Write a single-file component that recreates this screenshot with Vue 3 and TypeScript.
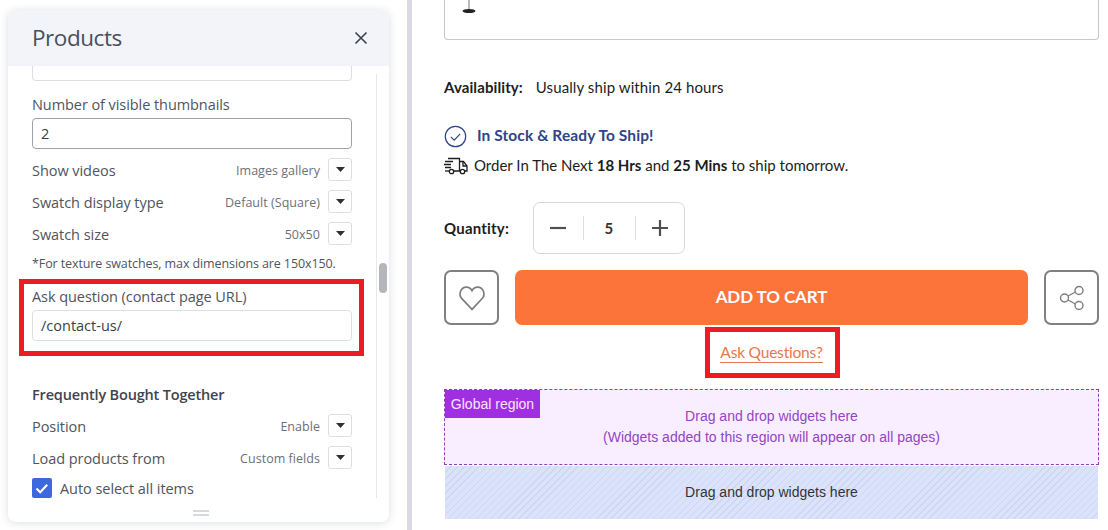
<script setup lang="ts">
interface Row { label: string; value: string }
const rowsA: Row[] = [
  { label: 'Show videos', value: 'Images gallery' },
  { label: 'Swatch display type', value: 'Default (Square)' },
  { label: 'Swatch size', value: '50x50' },
]
const rowsB: Row[] = [
  { label: 'Position', value: 'Enable' },
  { label: 'Load products from', value: 'Custom fields' },
]
</script>

<template>
  <div class="page">
    <aside class="side">
      <section class="panel">
        <header class="head">
          <h1>Products</h1>
          <svg class="close" width="14" height="14" viewBox="0 0 14 14"><path d="M1.500 1.500l11 11M12.500 1.500l-11 11" stroke="#3f4550" stroke-width="1.700" fill="none" /></svg>
        </header>
        <div class="scroll">
          <div class="content">
            <div class="stub"></div>
            <label class="lbl first">Number of visible thumbnails</label>
            <div class="field dark">2</div>
            <div class="rows">
              <div v-for="r in rowsA" :key="r.label" class="row">
                <span class="rl">{{ r.label }}</span>
                <span class="rv">{{ r.value }}</span>
                <span class="sel"><svg width="9" height="5" viewBox="0 0 9 5"><path d="M0 0h9L4.500 5z" fill="#2d323a" /></svg></span>
              </div>
            </div>
            <p class="note">*For texture swatches, max dimensions are 150x150.</p>
            <label class="lbl ask">Ask question (contact page URL)</label>
            <div class="field">/contact-us/</div>
            <h2>Frequently Bought Together</h2>
            <div class="rows second">
              <div v-for="r in rowsB" :key="r.label" class="row">
                <span class="rl">{{ r.label }}</span>
                <span class="rv">{{ r.value }}</span>
                <span class="sel"><svg width="9" height="5" viewBox="0 0 9 5"><path d="M0 0h9L4.500 5z" fill="#2d323a" /></svg></span>
              </div>
            </div>
            <div class="check">
              <span class="box"><svg width="14" height="11" viewBox="0 0 14 11"><path d="M1.500 5.500l3.700 3.700 7-7.500" stroke="#fff" stroke-width="2.200" fill="none" /></svg></span>
              <span class="rl">Auto select all items</span>
            </div>
          </div>
          <div class="track"><div class="thumb"></div></div>
        </div>
        <footer class="foot"><span class="grip"></span></footer>
      </section>
      <div class="mark mark-left"></div>
    </aside>
    <div class="divider"></div>
    <main class="main">
      <div class="image">
        <svg class="lamp" width="16" height="14" viewBox="0 0 16 14"><path d="M8 0v10" stroke="#777" stroke-width="1" /><ellipse cx="8" cy="11" rx="6.500" ry="2" fill="#222" /></svg>
      </div>
      <div class="avail"><b>Availability:</b><span>Usually ship within 24 hours</span></div>
      <div class="stock">
        <svg width="23" height="23" viewBox="0 0 23 23"><circle cx="11.500" cy="11.500" r="10.200" stroke="#2f4486" stroke-width="1.200" fill="none" /><path d="M6.800 11.800l3.400 3.400 6-6.400" stroke="#2f4486" stroke-width="1.200" fill="none" /></svg>
        <span class="up">In Stock &amp; Ready To Ship!</span>
      </div>
      <div class="order">
        <svg width="24" height="18" viewBox="0 0 24 18" fill="none" stroke="#1d1d1d" stroke-width="1.300"><path d="M4 1.500h11.500v12.500H10M15.500 4.500h4l3.500 4.500v5h-2M15.500 14h1" /><path d="M19 4.500v4.500h4" /><path d="M1 4.500h8M0 7.500h7M1 10.500h6" /><circle cx="7.500" cy="14.500" r="2.200" /><circle cx="18.500" cy="14.500" r="2.200" /><path d="M1 14h4" /></svg>
        <span class="up">Order In The Next <b>18 Hrs</b> and <b>25 Mins</b> to ship tomorrow.</span>
      </div>
      <div class="qty">
        <b>Quantity:</b>
        <div class="stepper">
          <span class="st"><svg width="16" height="16" viewBox="0 0 16 16"><path d="M0 8h16" stroke="#505050" stroke-width="2.200" /></svg></span>
          <span class="st num">5</span>
          <span class="st"><svg width="16" height="16" viewBox="0 0 16 16"><path d="M0 8h16M8 0v16" stroke="#505050" stroke-width="2.200" /></svg></span>
        </div>
      </div>
      <div class="actions">
        <button class="square">
          <svg width="28" height="26" viewBox="0 0 26 25" fill="none" stroke="#7d7d7d" stroke-width="1.600"><path d="M13 23.500L3 12.800C-.2 9.300 2 2 7.500 2 10 2 12 3.500 13 5.500 14 3.500 16 2 18.500 2 24 2 26.200 9.300 23 12.800z" /></svg>
        </button>
        <button class="cart">ADD TO CART</button>
        <button class="square">
          <svg width="26" height="26" viewBox="0 0 26 26" fill="none" stroke="#7d7d7d" stroke-width="1.400"><circle cx="20" cy="5.500" r="4" /><circle cx="5.500" cy="13" r="4" /><circle cx="20" cy="20.500" r="4" /><path d="M9 11l7.500-4M9 15l7.500 4" /></svg>
        </button>
      </div>
      <div class="askwrap"><a class="asklink">Ask Questions?</a></div>
      <div class="global">
        <span class="tag">Global region</span>
        <p>Drag and drop widgets here</p>
        <p>(Widgets added to this region will appear on all pages)</p>
      </div>
      <div class="drop">Drag and drop widgets here</div>
      <div class="mark mark-right"></div>
    </main>
  </div>
</template>

<style>
html, body { margin: 0; background: #fff; }
</style>

<style scoped>
.page { display: flex; width: 1108px; height: 530px; overflow: hidden; position: relative; background: #fff; }
.side { width: 407px; flex: none; padding: 10px 18px 8px 8px; box-sizing: border-box; background: #fff; font-family: "Open Sans", "Noto Sans", sans-serif; }
.divider { width: 5px; flex: none; background: #d9d9e6; }
.panel { width: 381px; height: 512px; background: #fff; border-radius: 8px; box-shadow: 0 1px 8px rgba(40, 50, 90, .16); display: flex; flex-direction: column; overflow: hidden; }
.head { height: 56px; flex: none; background: #f2f4fa; display: flex; align-items: center; justify-content: space-between; padding: 0 21px 0 24px; }
h1 { margin: -2px 0 0; font-size: 22.500px; font-weight: 400; color: #4a4f5a; letter-spacing: -.45px; }
.scroll { height: 432px; flex: none; display: flex; overflow: hidden; }
.content { width: 368px; flex: none; padding: 0 24px; box-sizing: border-box; }
.stub { height: 15px; border: 1px solid #dcdee3; border-top: 0; border-radius: 0 0 4px 4px; box-sizing: border-box; }
.lbl { display: block; font-size: 14.500px; line-height: 20px; color: #4f545e; letter-spacing: -.07px; }
.first { margin-top: 14px; }
.field { height: 31px; margin-top: 3px; border: 1px solid #dcdee3; border-radius: 4px; box-sizing: border-box; padding: 0 8px; display: flex; align-items: center; font-size: 14.500px; color: #3a3f48; letter-spacing: 0; }
.field.dark { border-color: #9da1a9; }
.rows { display: flex; flex-direction: column; gap: 9px; margin-top: 9px; }
.row { display: flex; align-items: center; height: 23px; }
.rl { font-size: 14.500px; color: #4f545e; letter-spacing: -.05px; padding-top: 1px; }
.rv { margin-left: auto; font-size: 12.500px; color: #6c707a; letter-spacing: .04px; padding-top: 1px; }
.sel { width: 24px; height: 23px; margin-left: 8px; box-sizing: border-box; border: 1px solid #dcdee3; border-radius: 3px; display: flex; align-items: center; justify-content: center; }
.note { margin: 9px 0 0; font-size: 12.500px; line-height: 20px; color: #4f545e; letter-spacing: -.1px; white-space: nowrap; }
.ask { margin-top: 13px; }
h2 { margin: 44px 0 0; font-size: 14.500px; line-height: 20px; font-weight: 600; color: #3f444e; letter-spacing: -.17px; }
.second { margin-top: 9px; }
.check { display: flex; align-items: center; gap: 8px; margin-top: 9px; height: 20px; }
.box { width: 20px; height: 20px; background: #3d68de; border-radius: 2px; display: flex; align-items: center; justify-content: center; flex: none; }
.track { width: 13px; margin-top: 8px; border-left: 1px solid #e7e8ec; box-sizing: border-box; background: #fff; position: relative; }
.thumb { position: absolute; left: 2px; top: 189px; width: 8px; height: 30px; border-radius: 4px; background: #b4b6bc; }
.foot { flex: 1; display: flex; justify-content: center; align-items: center; padding-top: 6px; padding-left: 4px; }
.grip { width: 16px; height: 6px; box-sizing: border-box; border-top: 2px solid #d8d9de; border-bottom: 2px solid #d8d9de; }
.main { flex: 1; padding: 0 9px 0 32px; font-family: Lato, "Open Sans", sans-serif; color: #1d1d1d; font-size: 15px; min-width: 0; letter-spacing: .1px; }
.image { height: 40px; box-sizing: border-box; border: 1px solid #c8c8c8; border-top: 0; border-radius: 0 0 4px 4px; padding-left: 16px; }
.lamp { display: block; }
.avail { margin-top: 37px; height: 20px; line-height: 20px; display: flex; gap: 13px; }
b { font-weight: 700; }
.stock { display: flex; align-items: center; gap: 10px; margin-top: 27px; height: 24px; color: #2f4486; font-weight: 700; font-size: 15.500px; }
.up { margin-bottom: 2px; }
.order { display: flex; align-items: center; gap: 6px; margin-top: 6px; height: 24px; letter-spacing: 0; }
.qty { display: flex; align-items: center; margin-top: 24px; height: 52px; }
.qty b { width: 89px; letter-spacing: .2px; margin-top: -1px; }
.stepper { width: 152px; height: 52px; box-sizing: border-box; border: 1px solid #d8d8d8; border-radius: 7px; display: flex; align-items: center; }
.st { flex: 1; height: 24px; display: flex; align-items: center; justify-content: center; }
.num { flex: none; width: 51px; border-left: 1px solid #dedede; border-right: 1px solid #dedede; font-weight: 700; color: #333; }
.actions { display: flex; justify-content: space-between; margin-top: 16px; height: 55px; }
button { padding: 0; font: inherit; cursor: pointer; }
.square { width: 55px; height: 55px; box-sizing: border-box; background: #fff; border: 2px solid #808080; border-radius: 7px; display: flex; align-items: center; justify-content: center; }
.cart { width: 513px; height: 55px; border: 0; border-radius: 7px; background: #fd743b; color: #fff; font-weight: 700; font-size: 17px; letter-spacing: -.1px; padding-bottom: 2px; }
.askwrap { height: 64px; display: flex; justify-content: center; box-sizing: border-box; padding-top: 18px; }
.asklink { height: 19px; line-height: 19px; padding-bottom: 0; border-bottom: 1px solid #e07a52; color: #e8764a; font-size: 15.500px; letter-spacing: -.2px; }
.global { height: 76px; box-sizing: border-box; border: 1px dashed #8f3fb8; background: #f9eeff; position: relative; text-align: center; font-family: "Liberation Sans", sans-serif; font-size: 14px; color: #9245c4; padding-top: 16px; letter-spacing: 0; }
.global p { margin: 0; line-height: 21px; }
.tag { position: absolute; left: 0; top: 0; width: 95px; height: 28px; background: #a02fe2; color: #f6e6ff; font-size: 14px; line-height: 28px; }
.drop { height: 53px; margin: 1px 1px 0; background: repeating-linear-gradient(135deg, #dbe3fb 0 4px, #cdd7f5 4px 5px); display: flex; align-items: center; justify-content: center; padding-bottom: 2px; box-sizing: border-box; font-family: "Liberation Sans", sans-serif; font-size: 14px; color: #333; letter-spacing: 0; }
.mark { position: absolute; border: 5px solid #ed1c24; box-sizing: border-box; }
.mark-left { left: 19px; top: 279px; width: 345px; height: 77px; }
.mark-right { left: 705px; top: 327px; width: 135px; height: 51px; }
</style>
